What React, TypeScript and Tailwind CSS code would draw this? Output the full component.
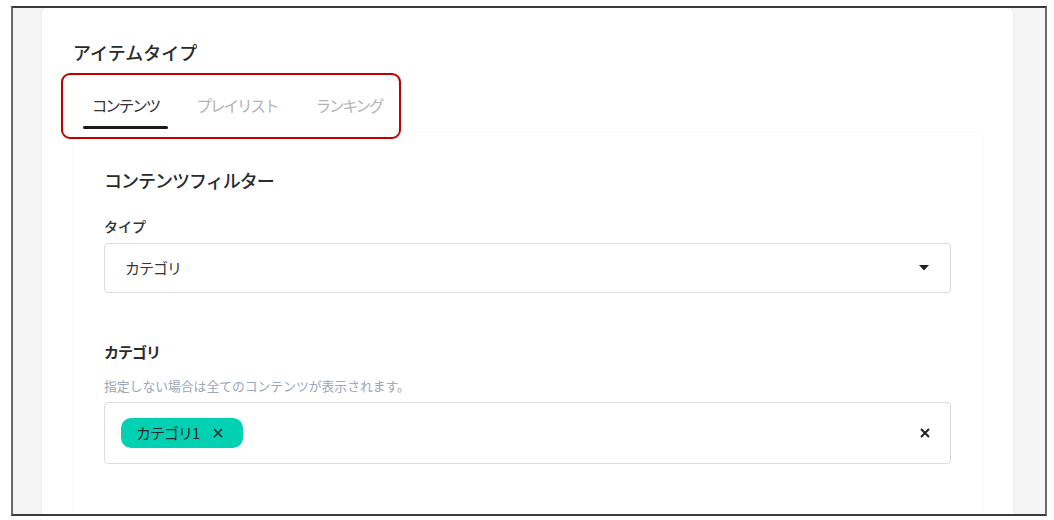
import React from "react";

const font = { fontFamily: '"Noto Sans CJK JP", "Noto Sans", sans-serif' };

export default function App() {
  return (
    <div className="w-[1054px] h-[520px] bg-white relative" style={font}>
      <div className="absolute left-[11px] top-[6px] w-[1036px] h-[510px] border-2 border-[#3a3a3a] border-l-[#6a6a6a] border-r-[#6a6a6a] bg-[#f5f5f5] overflow-hidden">
        <div className="ml-[29px] w-[971px] h-[600px] bg-white rounded-t-[6px] shadow-[0_0_4px_rgba(0,0,0,0.06)] pt-[32px] pl-[31px]">
          <div className="h-[24px] leading-[24px] text-[18px] text-[#2b2b2b] font-medium">アイテムタイプ</div>
          <div className="mt-[20px] ml-[10px] flex gap-[20px]">
            {[
              { t: "コンテンツ", active: true, w: "w-[85px]" },
              { t: "プレイリスト", active: false, w: "w-[98px]" },
              { t: "ランキング", active: false, w: "w-[86px]" },
            ].map((tab) => (
              <div key={tab.t} className={`${tab.w} flex flex-col items-center`}>
                <div
                  className={`pt-[9px] h-[33px] leading-[24px] text-[15.5px] tracking-[-2px] ${
                    tab.active ? "text-[#333]" : "text-[#b3b3b3]"
                  }`}
                >
                  {tab.t}
                </div>
                <div className={`mt-[9px] h-[3px] w-full rounded-full ${tab.active ? "bg-[#1a1a1a]" : "bg-transparent"}`} />
              </div>
            ))}
          </div>
          <div className="mt-[4px] w-[910px] h-[420px] bg-white rounded-[4px] shadow-[0_0_3px_rgba(0,0,0,0.05)] pt-[34px] pl-[31px] pr-[32px]">
            <div className="h-[26px] leading-[26px] text-[18px] font-medium text-[#2b2b2b] tracking-[-1px]">コンテンツフィルター</div>
            <div className="mt-[23px] h-[20px] leading-[20px] text-[14px] text-[#333] font-medium">タイプ</div>
            <div className="mt-[7px] h-[50px] border border-[#dcdcdc] rounded-[4px] flex items-center pl-[20px] pr-[20px]">
              <span className="flex-1 text-[15px] text-[#363636] tracking-[-1px]">カテゴリ</span>
              <svg width="10" height="6" viewBox="0 0 10 6" className="mr-[1px]">
                <path d="M0 0 H10 L5 5.5 Z" fill="#222" />
              </svg>
            </div>
            <div className="mt-[49px] h-[20px] leading-[20px] text-[15px] font-bold text-[#2b2b2b] tracking-[-1px]">カテゴリ</div>
            <div className="mt-[15px] h-[18px] leading-[18px] text-[12.8px] text-[#9aa6ba]">指定しない場合は全てのコンテンツが表示されます。</div>
            <div className="mt-[7px] h-[62px] border border-[#dcdcdc] rounded-[4px] flex items-center pl-[16px] pr-[20px]">
              <div className="flex-1">
                <div className="w-[122px] h-[30px] rounded-[10px] bg-[#00d1b2] flex items-center pl-[15px] text-[15px] text-[#2a2a2a] tracking-[-1px]">
                  <span>カテゴリ1</span>
                  <svg width="10" height="10" viewBox="0 0 10 10" className="ml-[14px]">
                    <path d="M1 1 L9 9 M9 1 L1 9" stroke="#2a2a2a" strokeWidth="1.6" />
                  </svg>
                </div>
              </div>
              <svg width="10" height="10" viewBox="0 0 10 10">
                <path d="M1 1 L9 9 M9 1 L1 9" stroke="#222" strokeWidth="2" />
              </svg>
            </div>
          </div>
        </div>
      </div>
      <div className="absolute left-[61px] top-[73px] w-[340px] h-[66px] border-2 border-[#c00000] rounded-[9px]" />
    </div>
  );
}
